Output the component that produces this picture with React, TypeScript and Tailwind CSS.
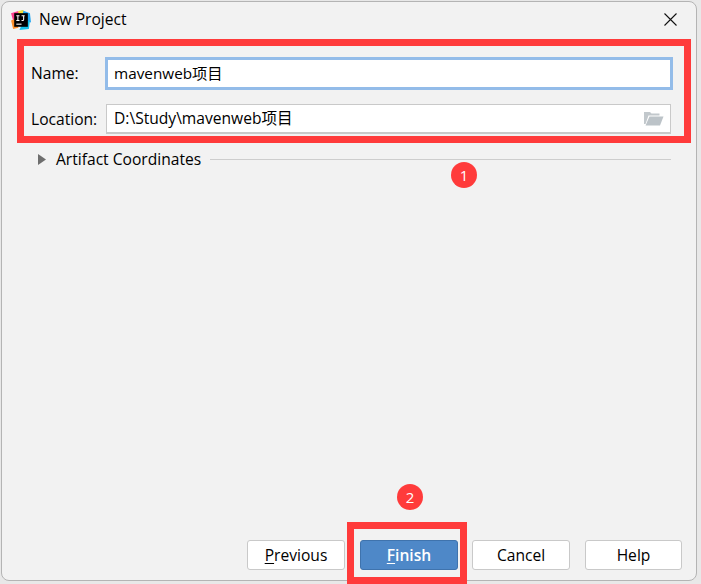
const font = "font-['Open_Sans','Noto_Sans_CJK_SC',sans-serif]";

function AppLogo() {
  return (
    <svg width="21" height="21" viewBox="0 0 20 20" className="shrink-0">
      <path d="M1 3 L8 1 L11 8 L4 14 Z" fill="#fc3f8e" />
      <path d="M1 10 L6 8 L8 17 L3 18 Z" fill="#fd8f2b" />
      <path d="M11 0 L19 3 L20 12 L14 10 Z" fill="#20a5f0" />
      <path d="M12 12 L19 10 L18 18 L9 19 Z" fill="#17c0e8" />
      <path d="M8 1 L13 0 L12 4 L8 4 Z" fill="#f5e03a" />
      <rect x="4" y="3" width="13" height="13" fill="#000" />
      <rect x="6" y="13" width="5" height="1" fill="#fff" />
      <path d="M6 5.5h3M7.5 5.5v4.5M6 10h3M11 5.5h3M13 5.5v3.5q0 1-1 1h-1" stroke="#fff" strokeWidth="1" fill="none" />
    </svg>
  );
}

function FolderIcon() {
  return (
    <svg width="20" height="15" viewBox="0 0 20 15" className="shrink-0">
      <path d="M0 1 h6 l1.5 1.5 h8 v2 H4.5 L1.5 13 H0 Z" fill="#c2c8cc" />
      <path d="M5.5 5.5 H19.5 L16 14.5 H1.5 Z" fill="#bcc3c8" />
    </svg>
  );
}

function DialogButton({
  label,
  mnemonic,
  rest,
  primary,
  narrow,
}: {
  label?: string;
  mnemonic?: string;
  rest?: string;
  primary?: boolean;
  narrow?: boolean;
}) {
  return (
    <button
      className={`h-[30px] pt-[2px] rounded-[3px] border text-[15.6px] leading-none ${narrow ? "w-[97px]" : "w-[98px]"} ${
        primary
          ? "bg-[#4e88c8] border-[#3f73ad] text-white font-semibold"
          : "bg-white border-[#c9c9c9] text-black"
      }`}
    >
      {mnemonic && <span className="underline underline-offset-2">{mnemonic}</span>}
      {rest}
      {label}
    </button>
  );
}

export default function App() {
  return (
    <div className={`relative w-[701px] h-[584px] overflow-hidden bg-[#e8e8e8] ${font}`}>
      <div className="ml-px mt-px w-[696px] h-[580px] flex flex-col bg-[#f2f2f2] border border-[#b4b4b4] rounded-lg">
        {/* title bar */}
        <div className="h-[36px] flex items-center pl-[8px] pr-[19px] shrink-0">
          <AppLogo />
          <span className="ml-[8px] text-[15.6px] text-black">New Project</span>
          <svg width="13" height="13" viewBox="0 0 13 13" className="ml-auto mb-[2px]">
            <path d="M0.5 0.5 L12.5 12.5 M12.5 0.5 L0.5 12.5" stroke="#111" strokeWidth="1.1" />
          </svg>
        </div>

        {/* fields */}
        <div className="mt-[19px] pl-[29px] pr-[23px] flex items-center text-[15.6px] text-black">
          <span className="w-[74px]">Name:</span>
          <div className="flex-1 h-[33px] bg-white border-[3px] border-[#93bce9] flex items-center pl-[6px] text-[15.3px]">
            mavenweb项目
          </div>
        </div>
        <div className="mt-[14px] pl-[29px] pr-[25px] flex items-center text-[15.6px] text-black">
          <span className="w-[75px] pt-[2px]">Location:</span>
          <div className="flex-1 h-[30px] bg-white border border-[#c9c9c9] border-b-2 flex items-center pl-[7px] pr-[6px]">
            <span>D:\Study\mavenweb项目</span>
            <span className="ml-auto">
              <FolderIcon />
            </span>
          </div>
        </div>

        {/* collapsed section */}
        <div className="mt-[14px] pl-[36px] pr-[25px] flex items-center text-[15.6px] text-black">
          <svg width="8" height="11" viewBox="0 0 8 11" className="shrink-0">
            <path d="M0 0 L8 5.5 L0 11 Z" fill="#6e6e6e" />
          </svg>
          <span className="ml-[10px]">Artifact Coordinates</span>
          <div className="ml-[9px] flex-1 h-px bg-[#cdcdcd]" />
        </div>

        {/* footer */}
        <div className="mt-auto mb-[10px] pr-[14px] flex justify-end">
          <DialogButton mnemonic="P" rest="revious" />
          <div className="w-[15px]" />
          <DialogButton mnemonic="F" rest="inish" primary />
          <div className="w-[14px]" />
          <DialogButton label="Cancel" />
          <div className="w-[15px]" />
          <DialogButton label="Help" narrow />
        </div>
      </div>

      {/* annotations over the screenshot */}
      <div className="absolute left-[17px] top-[39px] w-[674px] h-[104px] border-[7px] border-[#ff3b3b]" />
      <div className="absolute left-[347px] top-[522px] w-[120px] h-[62px] border-[7px] border-[#ff3b3b]" />
      <div className="absolute left-[451px] top-[162px] w-[26px] h-[26px] rounded-full bg-[#ff3b3b] text-white text-[15px] flex items-center justify-center">
        1
      </div>
      <div className="absolute left-[397px] top-[484px] w-[26px] h-[26px] rounded-full bg-[#ff3b3b] text-white text-[15px] flex items-center justify-center">
        2
      </div>
    </div>
  );
}
